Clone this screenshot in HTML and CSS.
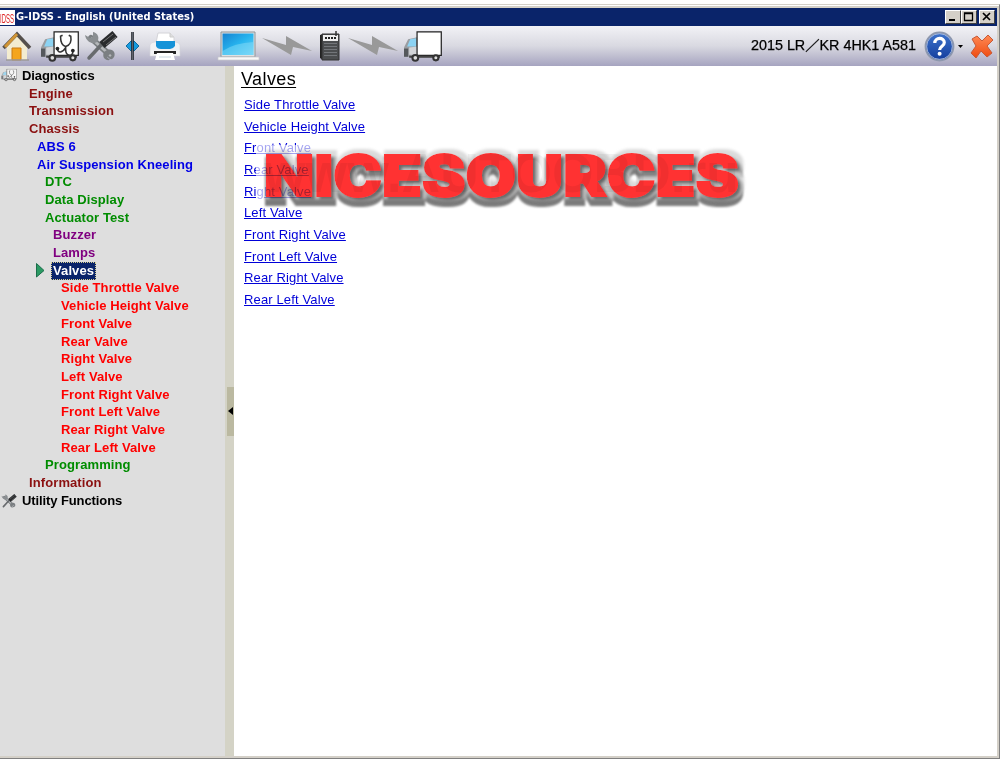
FILE: index.html
```html
<!DOCTYPE html>
<html lang="en">
<head>
<meta charset="UTF-8">
<title>G-IDSS - English (United States)</title>
<link rel="stylesheet" href="styles.css">
</head>
<body>
<svg class="defs" width="0" height="0">
    <defs>
        <linearGradient id="screen" x1="0" y1="0" x2="1" y2="1"><stop offset="0" stop-color="#1583d2"/><stop offset=".5" stop-color="#27b4ee"/><stop offset="1" stop-color="#6fd5f7"/></linearGradient>
        <linearGradient id="help" x1="0" y1="0" x2="0" y2="1"><stop offset="0" stop-color="#3f74cc"/><stop offset="1" stop-color="#123c9c"/></linearGradient>
        <linearGradient id="orange" x1="0" y1="0" x2="0" y2="1"><stop offset="0" stop-color="#ff8a55"/><stop offset="1" stop-color="#ee4a10"/></linearGradient>
        <!-- grey extruded edge behind the letters -->
        <filter id="bevel" filterUnits="userSpaceOnUse" x="0" y="0" width="500" height="75">
            <feMorphology in="SourceAlpha" operator="dilate" radius="3" result="fat"/>
            <feOffset in="fat" dx="2" dy="6" result="low"/>
            <feGaussianBlur in="low" stdDeviation="1" result="lowSoft"/>
            <feFlood flood-color="#7c7c7c"/>
            <feComposite in2="lowSoft" operator="in" result="dark"/>
            <feOffset in="fat" dx="3" dy="-1" result="right"/>
            <feGaussianBlur in="right" stdDeviation="1.6" result="rightSoft"/>
            <feFlood flood-color="#d2d2d2" flood-opacity=".8"/>
            <feComposite in2="rightSoft" operator="in" result="mid"/>
            <feOffset in="SourceAlpha" dx="3" dy="3"/>
            <feGaussianBlur stdDeviation="1.4" result="nearSoft"/>
            <feFlood flood-color="#6c6c6c"/>
            <feComposite in2="nearSoft" operator="in" result="near"/>
            <feMerge><feMergeNode in="dark"/><feMergeNode in="mid"/><feMergeNode in="near"/><feMergeNode in="SourceGraphic"/></feMerge>
        </filter>
        <symbol id="truck" viewBox="0 0 38 30">
            <path d="M1 25V16l4-8 9-2v19z" fill="#9a9da1"/>
            <path d="M4 15l3-7 6-1v8z" fill="#8cd3f3"/>
            <path d="M1 17h4v8H1z" fill="#55585c"/>
            <path d="M6 16l8-1v8H6z" fill="#d3d5d8"/>
            <path d="M13.700.7h23.600v23H13.700z" fill="#fff" stroke="#222" stroke-width="1.200"/>
            <path d="M6 24h30v2H6z" fill="#444"/>
            <g fill="#ddd" stroke="#333" stroke-width="2"><circle cx="12" cy="26" r="2.800"/><circle cx="32" cy="26" r="2.500"/></g>
        </symbol>
        <symbol id="scope" viewBox="0 0 38 30">
            <use href="#truck"/>
            <g fill="none" stroke="#333" stroke-width="1.500"><path d="M22 4l-2 1c0 6 1 9 5 10 4-1 6-4 5-10l-2-1"/><path d="M25 15v3c0 7 7 7 7 2M25 16c-3 5-8 6-8 1"/></g>
            <circle cx="32" cy="19" r="1.800" fill="#222"/><circle cx="17" cy="17" r="1.800" fill="#222"/>
        </symbol>
        <symbol id="tools" viewBox="0 0 34 30">
            <path d="M7 7l20 18" stroke="#7b7f82" stroke-width="6" stroke-linecap="round"/>
            <path d="M7 7l20 18" stroke="#b5b8ba" stroke-width="2.500"/>
            <path d="M1 4l5 3 3-1V1c5 1 7 6 4 10-4 3-11 0-12-7z" fill="#8a8e91"/>
            <path d="M23 19c6-2 9 3 7 7l-4-3-3 3 3 3c-6 1-8-4-6-8z" fill="#7b7f82"/>
            <path d="M5 27l13-14" stroke="#686b6e" stroke-width="3.500" stroke-linecap="round"/>
            <path d="M18 14L31 3" stroke="#292b2d" stroke-width="8"/>
            <path d="M19 11l10-8M22 14l10-8" stroke="#777" stroke-width="1"/>
        </symbol>
        <symbol id="bolt" viewBox="0 0 50 21"><path d="M0 2l24 7V0l26 15-19-4-2 8z" fill="#999"/></symbol>
    </defs>
</svg>
<div class="window">
    <header class="titlebar">
        <span class="logo"><svg width="15" height="15"><text x="0" y="13" textLength="14" lengthAdjust="spacingAndGlyphs">IDSS</text></svg></span>
        <h1>G-IDSS - English (United States)</h1>
        <div class="controls">
            <button><svg width="14" height="12"><path d="M3 9h6" stroke="#000" stroke-width="2"/></svg></button>
            <button><svg width="14" height="12"><path d="M2.500 2h8v7.500h-8zM2.500 2.500h8" fill="none" stroke="#000" stroke-width="1.300"/></svg></button>
            <button class="close"><svg width="14" height="12"><path d="M3 2l7 7M10 2l-7 7" stroke="#000" stroke-width="1.700"/></svg></button>
        </div>
    </header>

    <nav class="toolbar">
        <svg class="home" width="30" height="31" viewBox="0 0 30 31">
            <path d="M5 14L15 4l10 10v15H5z" fill="#f3ecd0"/>
            <path d="M10 17h9v12h-9z" fill="#f5a51c" stroke="#c97a12"/>
            <path d="M1.500 17L15 3l13 14" fill="none" stroke="#55504c" stroke-width="3.500"/>
            <path d="M3 16L15 3" stroke="#d09435" stroke-width="3"/>
            <path d="M4 29h23" stroke="#9c9a98" stroke-width="1.500"/>
        </svg>
        <svg class="scope" width="39" height="31"><use href="#scope"/></svg>
        <svg class="tools" width="34" height="30"><use href="#tools"/></svg>
        <svg class="split" width="13" height="30" viewBox="0 0 13 30">
            <path d="M0 15l5-5h3l5 5-5 5H5z" fill="#159be0" stroke="#156a9d"/>
            <path d="M6.500 1v28" stroke="#20242a" stroke-width="2.600"/>
            <path d="M6.500 1v28" stroke="#8a8f9a" stroke-width=".6"/>
        </svg>
        <svg class="printer" width="32" height="29" viewBox="0 0 32 29">
            <path d="M7 11L9 1h12l4 4v7z" fill="#fff" stroke="#d4d4d8"/>
            <path d="M21 1v4h4" fill="#ddd" stroke="#ccc"/>
            <path d="M1 13q1-3 5-3h20q4 0 5 3v11H1z" fill="#f2f2f4" stroke="#d3d3da" stroke-width=".6"/>
            <path d="M7 9h19v5q-2 3-5 3h-9q-4 0-5-3z" fill="#1793d8"/>
            <path d="M5 19h22v3H5z" fill="#222"/>
            <path d="M8 21h16l2 7H6z" fill="#fff"/>
            <path d="M10 25h12" stroke="#c6d6df"/>
        </svg>
        <svg class="laptop" width="43" height="31" viewBox="0 0 43 31">
            <path d="M4 1h34v25H4z" fill="#dfe1e2" stroke="#8d9498"/>
            <path d="M5.500 2.500h31V24h-31z" fill="url(#screen)"/>
            <path d="M5.500 20Q17 12 36.500 11v13h-31z" fill="#86dcf8" opacity=".5"/>
            <path d="M1 26h41v3H1z" fill="#f8f8f8" stroke="#c9c9cc" stroke-width=".7"/>
        </svg>
        <svg class="bolt" width="50" height="21"><use href="#bolt"/></svg>
        <svg class="device" width="20" height="30" viewBox="0 0 20 30">
            <path d="M0 4l3-1v26l-3-2z" fill="#222"/>
            <path d="M2 3h17v26H2z" fill="#4b4d4f" stroke="#333"/>
            <path d="M3 4h15v6H3z" fill="#eee"/>
            <path d="M16 0v5" stroke="#333" stroke-width="1.500"/>
            <path d="M5 7h11" stroke="#222" stroke-width="2" stroke-dasharray="2 1"/>
            <path d="M4 12.500h13M4 15.500h13M4 18.500h13M4 21.500h13M4 24.500h13" stroke="#73767a"/>
        </svg>
        <svg class="bolt" width="50" height="21"><use href="#bolt"/></svg>
        <svg class="truck" width="39" height="31"><use href="#truck"/></svg>
        <span class="vehicle"><svg width="168" height="20"><text x="2" y="14" textLength="165" lengthAdjust="spacingAndGlyphs">2015 LR／KR 4HK1 A581</text></svg></span>
        <svg class="help" width="31" height="31" viewBox="0 0 31 31">
            <circle cx="15.500" cy="15.500" r="14" fill="url(#help)" stroke="#8e98ae" stroke-width="1.800"/>
            <circle cx="15.500" cy="15.500" r="12.800" fill="none" stroke="#c9d3ea" stroke-width=".7"/>
            <path d="M10.800 12c0-6 9.500-6 9.500-.5 0 4-4.700 3.500-4.700 7.500" fill="none" stroke="#fff" stroke-width="3.200"/>
            <circle cx="15.600" cy="22.800" r="2" fill="#fff"/>
        </svg>
        <svg class="caret" width="5" height="3"><path d="M0 0h5L2.500 3z"/></svg>
        <svg class="exit" width="24" height="25" viewBox="0 0 24 25"><path d="M2 5l5-3 5 5 6-6 5 5-6 6 5 7-5 4-6-6-5 7-5-5 5-7z" fill="url(#orange)" stroke="#c65a38" stroke-linejoin="round"/></svg>
    </nav>

    <div class="body">
        <aside class="sidebar">
            <ul class="tree">
                <li class="root"><svg width="16" height="15" viewBox="0 0 38 34" opacity=".75"><use href="#scope" width="38" height="32"/></svg><span>Diagnostics</span></li>
                <li class="l1">Engine</li>
                <li class="l1">Transmission</li>
                <li class="l1">Chassis</li>
                <li class="l2">ABS 6</li>
                <li class="l2">Air Suspension Kneeling</li>
                <li class="l3">DTC</li>
                <li class="l3">Data Display</li>
                <li class="l3">Actuator Test</li>
                <li class="l4">Buzzer</li>
                <li class="l4">Lamps</li>
                <li class="l4 current"><svg width="9" height="15"><path d="M.5.5L8 7.500.5 14z" fill="#2b9a63" stroke="#1b6d4b"/></svg><span>Valves</span></li>
                <li class="l5">Side Throttle Valve</li>
                <li class="l5">Vehicle Height Valve</li>
                <li class="l5">Front Valve</li>
                <li class="l5">Rear Valve</li>
                <li class="l5">Right Valve</li>
                <li class="l5">Left Valve</li>
                <li class="l5">Front Right Valve</li>
                <li class="l5">Front Left Valve</li>
                <li class="l5">Rear Right Valve</li>
                <li class="l5">Rear Left Valve</li>
                <li class="l3">Programming</li>
                <li class="l1">Information</li>
                <li class="root"><svg width="16" height="14"><use href="#tools"/></svg><span>Utility Functions</span></li>
            </ul>
        </aside>
        <div class="splitter"><span class="grip"><svg width="6" height="8"><path d="M5 0v8L0 4z"/></svg></span></div>
        <main class="content">
            <h2>Valves</h2>
            <ul class="links">
                <li><a href="#">Side Throttle Valve</a></li>
                <li><a href="#">Vehicle Height Valve</a></li>
                <li><a href="#">Front Valve</a></li>
                <li><a href="#">Rear Valve</a></li>
                <li><a href="#">Right Valve</a></li>
                <li><a href="#">Left Valve</a></li>
                <li><a href="#">Front Right Valve</a></li>
                <li><a href="#">Front Left Valve</a></li>
                <li><a href="#">Rear Right Valve</a></li>
                <li><a href="#">Rear Left Valve</a></li>
            </ul>
            <div class="fade"></div>
            <svg class="watermark" width="500" height="75">
                <text x="8" y="51" textLength="475" lengthAdjust="spacingAndGlyphs" fill="#ff3131" stroke="#ff3131" stroke-width="1.800" filter="url(#bevel)">NICESOURCES</text>
                <text class="faint" x="8" y="47" textLength="475" lengthAdjust="spacingAndGlyphs" opacity=".05">www.AUTOOBD.ru</text>
            </svg>
        </main>
    </div>
</div>
</body>
</html>
```

FILE: styles.css
```css
:root{
    --navy:#0a246a;
    --frame:#d4d0c8;
}
*{box-sizing:border-box;margin:0;padding:0;}
body{
    width:1000px;
    height:763px;
    overflow:hidden;
    background:#fff;
    font-family:"Liberation Sans",sans-serif;
}
svg{
    display:block;
    flex:none;
}
.defs{position:absolute;}
.window{
    display:flex;
    flex-direction:column;
    height:755px;
    margin-top:4px;
    padding:2px 2px 2px 0;
    background:var(--frame);
    border-top:1px solid #d4d0c8;
    border-right:1px solid #808080;
    border-bottom:1px solid #808080;
    box-shadow:inset 0 1px #fff;
}
.titlebar{
    display:flex;
    align-items:center;
    height:18px;
    flex:none;
    margin-top:1px;
    background:var(--navy);
    color:#fff;
}
.logo{
    width:15px;
    height:15px;
    background:#fff;
    overflow:hidden;
}
.logo text{
    font-size:13px;
    fill:#d22;
}
.titlebar h1{
    margin-left:1px;
    padding-bottom:1px;
    font:bold 11px "DejaVu Sans Condensed","DejaVu Sans",sans-serif;
    font-stretch:condensed;
}
.controls{
    display:flex;
    margin-left:auto;
    padding-right:2px;
}
.controls button{
    width:16px;
    height:14px;
    background:var(--frame);
    border:1px solid;
    border-color:#fff #404040 #404040 #fff;
}
.controls .close{margin-left:2px;}
.toolbar{
    display:flex;
    align-items:center;
    height:40px;
    flex:none;
    padding:0 3px 0 2px;
    background:linear-gradient(#f2f2f6,#d9d9e1 50%,#a6a4c0);
}
.scope{margin-left:8px;}
.tools{margin-left:5px;}
.split{margin-left:8px;}
.printer{margin-left:10px;}
.laptop{margin-left:36px;}
.bolt{margin-left:2px;}
.device{margin-left:8px;}
.device + .bolt{margin-left:8px;}
.truck{margin-left:5px;}
.vehicle{
    margin-left:auto;
    font:14px "Liberation Sans","Noto Sans CJK JP",sans-serif;
}
.vehicle text{
    stroke:#000;
    stroke-width:.25px;
}
.help{margin-left:7px;}
.caret{margin-left:3px;}
.exit{margin-left:7px;}
.body{
    display:flex;
    flex:1;
    min-height:0;
}
.sidebar{
    width:225px;
    background:#dedede;
}
.tree{
    list-style:none;
    padding-top:1px;
    font-size:13px;
    font-weight:bold;
    letter-spacing:.1px;
}
.tree li{
    height:17.71px;
    line-height:18px;
    white-space:nowrap;
}
.tree .root{
    display:flex;
    align-items:center;
    gap:5px;
    padding-left:1px;
    color:#000;
    letter-spacing:-.1px;
}
.tree .l1{padding-left:29px;color:#8b1010;}
.tree .l2{padding-left:37px;color:#0000e6;}
.tree .l3{padding-left:45px;color:#008c00;}
.tree .l4{padding-left:53px;color:#800080;}
.tree .l5{padding-left:61px;color:#f00;}
.tree .current{
    display:flex;
    align-items:center;
    gap:6px;
    padding-left:36px;
}
.current span{
    height:18px;
    line-height:16px;
    padding:0 1px;
    color:#fff;
    background:var(--navy);
    border:1px dotted #d8cf90;
}
.splitter{
    display:flex;
    align-items:center;
    justify-content:flex-end;
    width:9px;
    background:#d4d3c6;
}
.grip{
    display:flex;
    align-items:center;
    justify-content:flex-end;
    width:7px;
    height:49px;
    background:#bbb9a1;
}
.content{
    position:relative;
    flex:1;
    padding:2px 0 0 7px;
    background:#fff;
}
.content h2{
    font-size:18px;
    font-weight:normal;
    line-height:22px;
    letter-spacing:.4px;
    text-decoration:underline;
    text-underline-offset:2px;
}
.links{
    list-style:none;
    padding:4px 0 0 3px;
    font-size:13px;
    letter-spacing:.14px;
}
.links li{
    height:21.67px;
    line-height:21px;
}
.links a{color:#0000d8;}
/* washed out area under the watermark */
.fade{
    position:absolute;
    left:22px;
    top:79px;
    width:56px;
    height:56px;
    background:rgba(255,255,255,.65);
}
.watermark{
    position:absolute;
    left:22px;
    top:79px;
    font:900 57px Inter,sans-serif;
    mix-blend-mode:multiply;
}
.faint{
    font:bold 56px "Liberation Sans",sans-serif;
}
```
